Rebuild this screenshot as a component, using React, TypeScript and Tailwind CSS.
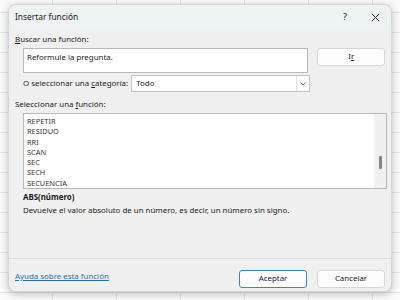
import React from "react";

const FUNCIONES = ["REPETIR", "RESIDUO", "RRI", "SCAN", "SEC", "SECH", "SECUENCIA"];

// hoja de cálculo de fondo, solo líneas de celdas
const Hoja = () => (
  <div className="absolute inset-0 overflow-hidden bg-[#fbfbfb]">
    <div className="-ml-[11px] -mt-[7px] grid grid-cols-[repeat(8,64px)]">
      {Array.from({ length: 128 }).map((_, i) => (
        <div key={i} className="h-[20px] border-r border-b border-[#e3e3e3]" />
      ))}
    </div>
  </div>
);

const Boton = ({ children, primary }: { children: React.ReactNode; primary?: boolean }) => (
  <button
    className={`h-[18px] w-[68px] rounded-[3px] bg-[#fdfdfd] text-[7.9px] text-[#1b1b1b] border ${
      primary ? "border-[#2e88c9]" : "border-[#d6d6d6]"
    }`}
  >
    {children}
  </button>
);

export default function App() {
  return (
    <div className="relative h-[300px] w-[400px] overflow-hidden font-['Noto_Sans',sans-serif] text-[#1b1b1b]">
      <Hoja />
      {/* dialogo */}
      <div className="absolute left-[8px] top-[4px] flex h-[288px] w-[384px] flex-col overflow-hidden rounded-[8px] border border-[#d4d4d4] bg-[#f0f0f0] shadow-[0_2px_8px_rgba(0,0,0,0.25)]">
        <div className="flex h-[24px] items-center bg-[#edf2f2] pl-[6px] text-[8.4px]">
          <span className="flex-1">Insertar función</span>
          <span className="w-[20px] text-center text-[9px]">?</span>
          <span className="ml-[14px] mr-[10px] flex w-[12px] justify-center">
            <svg width="9" height="9" viewBox="0 0 10 10" stroke="#222" strokeWidth="1.1">
              <path d="M1 1L9 9M9 1L1 9" />
            </svg>
          </span>
        </div>

        <div className="flex flex-1 flex-col px-[6px] text-[7.9px]">
          <div className="mt-[4px] leading-[12px]">
            <span className="underline">B</span>uscar una función:
          </div>
          <div className="mt-[3px] flex items-start gap-[9px] pl-[8px]">
            <div className="h-[25px] w-[287px] border border-[#b8b8b8] bg-white px-[3px] pt-[2px] leading-[12px]">
              Reformule la pregunta.
            </div>
            <Boton>
              I<span className="underline">r</span>
            </Boton>
          </div>

          <div className="mt-[2px] flex w-[295px] items-center gap-[3px] pl-[8px]">
            <span className="shrink-0 whitespace-nowrap">
              O seleccionar una <span className="underline">c</span>ategoría:
            </span>
            <div className="flex h-[17px] flex-1 items-center border border-[#c4c4c4] bg-white">
              <span className="flex-1 pl-[4px]">Todo</span>
              <span className="flex h-full w-[13px] items-center justify-center border-l border-[#e0e0e0]">
                <svg width="6" height="4" viewBox="0 0 6 4" fill="none" stroke="#555" strokeWidth="0.8">
                  <path d="M0.5 0.5L3 3L5.5 0.5" />
                </svg>
              </span>
            </div>
          </div>

          <div className="mt-[6px] leading-[12px]">
            Seleccionar una <span className="underline">f</span>unción:
          </div>
          <div className="ml-[8px] mt-[3px] flex h-[76px] w-[364px] border border-[#b8b8b8] bg-white">
            <div className="flex flex-1 flex-col pl-[3px] pt-[2px] text-[7.4px] leading-[10.3px] text-[#333]">
              {FUNCIONES.map((f) => (
                <span key={f}>{f}</span>
              ))}
            </div>
            <div className="flex w-[12px] flex-col items-center bg-[#f0f0f0] pt-[42px]">
              <div className="h-[13px] w-[3px] rounded-[1px] bg-[#858585]" />
            </div>
          </div>

          <div className="mt-[2px] pl-[8px] font-bold leading-[12px]">ABS(número)</div>
          <div className="mt-[1px] pl-[8px] leading-[12px]">
            Devuelve el valor absoluto de un número, es decir, un número sin signo.
          </div>

          <div className="flex-1" />
        </div>

        <div className="h-px bg-[#dcdcdc]" />
        <div className="flex h-[32px] items-center px-[6px] text-[7.9px]">
          <span className="flex-1 pt-[4px] text-[#2a6fb5] underline">Ayuda sobre esta función</span>
          <div className="flex gap-[10px] pt-[8px]">
            <Boton primary>Aceptar</Boton>
            <Boton>Cancelar</Boton>
          </div>
        </div>
      </div>
    </div>
  );
}
